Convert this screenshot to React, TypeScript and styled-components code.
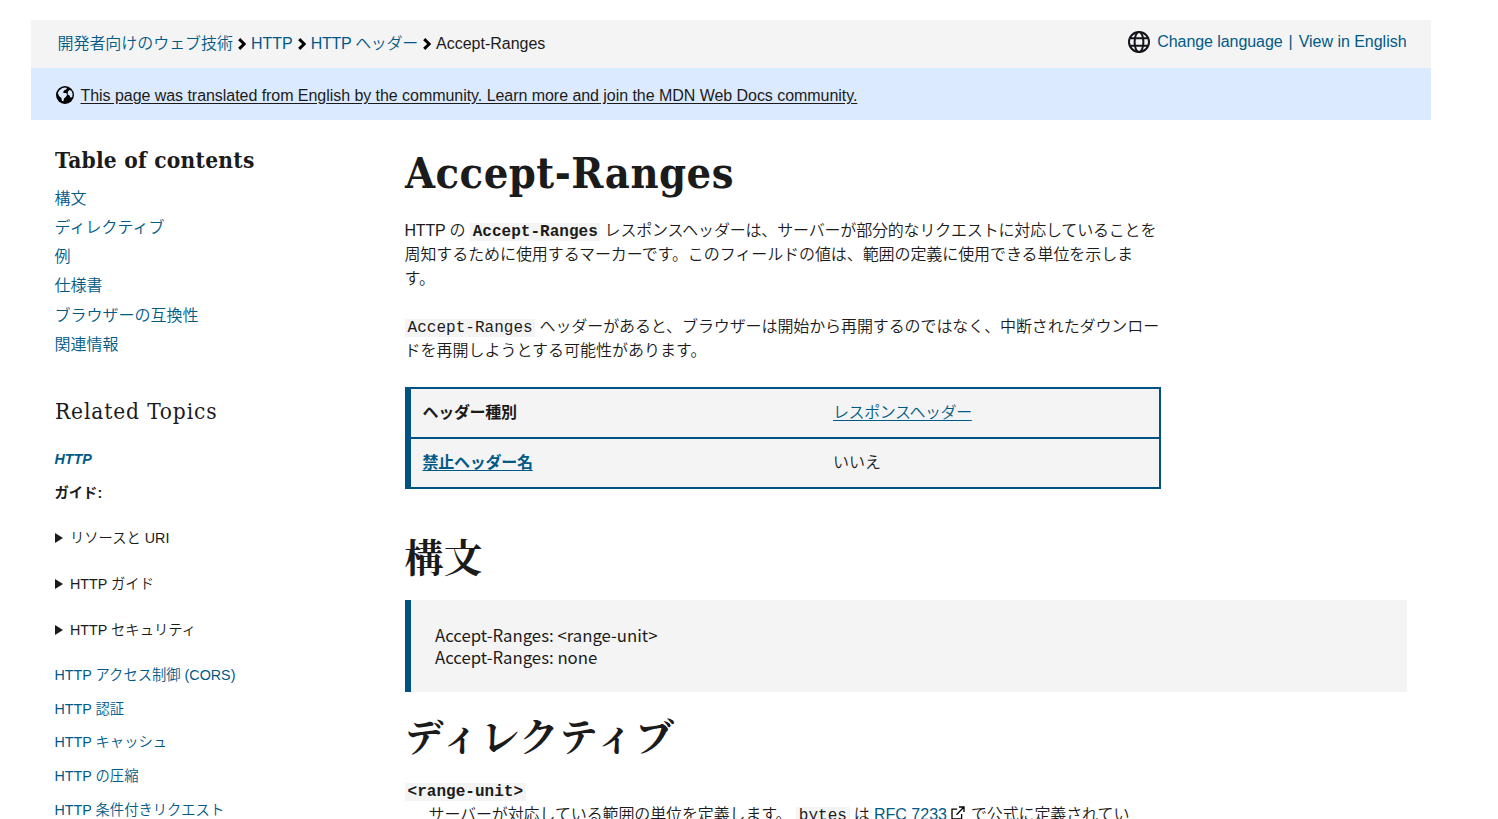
import React from 'react';
import styled, { createGlobalStyle } from 'styled-components';

const link = '#005a87';
const ink = '#1b1b1b';
const panel = '#f4f4f4';
const edge = '#005282';
const slab = '"DejaVu Serif Condensed", "DejaVu Serif", serif';

const GlobalStyle = createGlobalStyle`
  *, *::before, *::after { box-sizing: border-box; }
  html, body { margin: 0; height: 819px; overflow: hidden; background: #fff; }
  body {
    color: ${ink};
    font: 350 16px/24px "Liberation Sans", "Noto Sans CJK JP", sans-serif;
  }
  h1, h2, h3, p, ul, ol, dl, dd, pre { margin: 0; padding: 0; }
  ul, ol { list-style: none; }
`;

const Page = styled.div`
  width: 1400px;
  height: 799px;
  margin: 20px 0 0 31px;
  overflow: hidden;
`;

const TopBar = styled.header`
  display: flex;
  justify-content: space-between;
  height: 48px;
  padding: 0 24.5px 0 26.5px;
  background: ${panel};
`;

const Crumbs = styled.ol`
  display: flex;
  align-items: center;
  height: 47px;
  white-space: nowrap;
`;

const Crumb = styled.li<{ $spacing?: number }>`
  display: flex;
  align-items: center;
  letter-spacing: ${(p) => p.$spacing ?? 0}px;
`;

const Chevron = styled.svg`
  width: 8px;
  height: 12px;
  margin: 1px 5px 0;
`;

const Link = styled.a<{ $underlined?: boolean; $spacing?: number }>`
  color: ${link};
  text-decoration: ${(p) => (p.$underlined ? 'underline' : 'none')};
  text-underline-offset: 2px;
  letter-spacing: ${(p) => p.$spacing ?? 0}px;
`;

const Languages = styled.div`
  display: flex;
  align-items: center;
  height: 44px;
  color: ${link};
  white-space: nowrap;
  svg { margin-right: 7px; }
`;

const Divider = styled.span`
  margin: 0 6px;
`;

const Banner = styled.div`
  display: flex;
  align-items: center;
  height: 52px;
  padding: 4px 0 0 25px;
  background: #dbeafe;
  svg { margin-right: 6.5px; margin-top: -3px; }
`;

const BannerLink = styled.a`
  color: ${ink};
  letter-spacing: -0.047px;
  text-decoration: underline;
  text-underline-offset: 2px;
`;

const Columns = styled.div`
  display: grid;
  grid-template-columns: 350px 1002px;
  padding-left: 24px;
`;

const Sidebar = styled.aside`
  padding-top: 26px;
`;

const TocTitle = styled.h2`
  font: 700 22.5px/28px ${slab};
  letter-spacing: 0.25px;
`;

const TocList = styled.ul`
  margin: 9.6px 0 0 -0.5px;
`;

const TocItem = styled.li`
  height: 29.3px;
  line-height: 29.3px;
`;

const RelatedTitle = styled.h2`
  margin-top: 37.8px;
  font: 400 22.5px/28px ${slab};
  letter-spacing: 0.87px;
`;

const Topics = styled.div`
  margin: 18px 0 0 -0.5px;
  font-size: 14.3px;
  line-height: 33.7px;
`;

const TopicHead = styled.div<{ $link?: boolean }>`
  font-weight: 700;
  height: 33.7px;
  font-style: ${(p) => (p.$link ? 'italic' : 'normal')};
  color: ${(p) => (p.$link ? link : ink)};
`;

const Disclosure = styled.div`
  display: flex;
  align-items: center;
  height: 46px;
  svg { margin: -1px 7.5px 0 0; }
`;

const DisclosureList = styled.div`
  margin: 5px 0 5.3px;
`;

const TopicLink = styled.a`
  display: block;
  height: 33.7px;
  color: ${link};
`;

const Article = styled.main`
  padding-top: 25px;
  white-space: nowrap;
`;

const Title = styled.h1`
  font: 700 43px/56px ${slab};
  letter-spacing: 0.5px;
`;

const Paragraph = styled.p<{ $top: number }>`
  margin: ${(p) => p.$top}px 0 0 -0.5px;
`;

const Line = styled.span<{ $spacing?: number }>`
  display: block;
  height: 24px;
  letter-spacing: ${(p) => p.$spacing ?? 0}px;
`;

const Code = styled.code<{ $bold?: boolean }>`
  display: inline-block;
  height: 18px;
  margin-left: 0.5px;
  padding: 0 2.5px;
  font: ${(p) => (p.$bold ? 700 : 400)} 16px/19px "Liberation Mono", monospace;
  letter-spacing: 0.03px;
  background: ${panel};
`;

const Properties = styled.div`
  width: 756px;
  margin-top: 24px;
  border: 2px solid ${edge};
  border-left-width: 6px;
  background: ${panel};
`;

const PropertyRow = styled.div`
  display: grid;
  grid-template-columns: 410.5px 1fr;
  height: 48px;
  padding: 12px 11.5px 0;
  & + & { height: 50px; border-top: 2px solid ${edge}; }
`;

const PropertyName = styled.div`
  font-weight: 700;
  letter-spacing: -0.3px;
`;

const Heading = styled.h2<{ $top: number; $spacing?: number }>`
  margin: ${(p) => p.$top}px 0 0 -0.5px;
  font: 700 39px/50px "Liberation Serif", "Noto Serif CJK JP", "Noto Sans CJK JP", serif;
  letter-spacing: ${(p) => p.$spacing ?? 0}px;
`;

const Syntax = styled.pre`
  height: 92px;
  margin-top: 16px;
  padding: 23.5px 24px;
  border-left: 6px solid ${edge};
  background: ${panel};
  font: 400 16.75px/22px "Noto Sans CJK JP", sans-serif;
`;

const Definition = styled.dl`
  margin-top: 16px;
  dt { height: 24px; margin-left: -0.5px; }
  dd { margin-left: 23.5px; letter-spacing: -0.12px; }
`;

const ChevronIcon = () => (
  <Chevron viewBox="0 0 8 12">
    <path d="M1.2 1.2 6.2 6 1.2 10.8" fill="none" stroke="#000" strokeWidth="3" />
  </Chevron>
);

const GlobeIcon = () => (
  <svg width="22" height="22" viewBox="0 0 22 22" fill="none" stroke="#15141a" strokeWidth="2">
    <circle cx="11" cy="11" r="10" />
    <ellipse cx="11" cy="11" rx="4.4" ry="10" />
    <path d="M2 7.3h18M2 14.7h18" />
  </svg>
);

const EarthIcon = () => (
  <svg width="18" height="18" viewBox="0 0 18 18">
    <circle cx="9" cy="9" r="9" fill="#000" />
    <path d="M3.2 4.4 6.4 2l3.2-.4 1.4.8-1 1.2-2 1-1 1.8 1.2.6 1.8.1 1.2 1.7-1.4 2.3-1.6 1.2-.9 3-1.4-.4-.5-3L3 10 1.8 7zM12 5.6l1.6-1.5 1.8.6 1.2 3-.3 3.4-1.7.6-1.1-2.2-1.9-1.2z" fill="#dbeafe" />
  </svg>
);

const TriangleIcon = () => (
  <svg width="8" height="10" viewBox="0 0 8 10">
    <path d="M0 0v10l8-5z" fill={ink} />
  </svg>
);

const External = styled.svg`
  width: 14px;
  height: 14px;
  margin: 0 6px 0 4px;
`;

const ExternalIcon = () => (
  <External viewBox="0 0 14 14" fill="none" stroke="#000" strokeWidth="1.3">
    <path d="M6.2 3.2H1v9.6h9.6V8M8 1h5v5M13 1 5.5 8.7" />
  </External>
);

const toc = ['構文', 'ディレクティブ', '例', '仕様書', 'ブラウザーの互換性', '関連情報'];
const groups = ['リソースと URI', 'HTTP ガイド', 'HTTP セキュリティ'];
const topics = ['HTTP アクセス制御 (CORS)', 'HTTP 認証', 'HTTP キャッシュ', 'HTTP の圧縮', 'HTTP 条件付きリクエスト'];

export default function App() {
  return (
    <>
      <GlobalStyle />
      <Page>
        <TopBar>
          <Crumbs>
            <Crumb><Link $spacing={-0.05}>開発者向けのウェブ技術</Link><ChevronIcon /></Crumb>
            <Crumb><Link>HTTP</Link><ChevronIcon /></Crumb>
            <Crumb><Link $spacing={-0.3}>HTTP ヘッダー</Link><ChevronIcon /></Crumb>
            <Crumb>Accept-Ranges</Crumb>
          </Crumbs>
          <Languages>
            <GlobeIcon />
            <Link $spacing={-0.07}>Change language</Link>
            <Divider>|</Divider>
            <Link $spacing={-0.03}>View in English</Link>
          </Languages>
        </TopBar>
        <Banner>
          <EarthIcon />
          <BannerLink>This page was translated from English by the community. Learn more and join the MDN Web Docs community.</BannerLink>
        </Banner>
        <Columns>
          <Sidebar>
            <TocTitle>Table of contents</TocTitle>
            <TocList>
              {toc.map((item) => <TocItem key={item}><Link>{item}</Link></TocItem>)}
            </TocList>
            <RelatedTitle>Related Topics</RelatedTitle>
            <Topics>
              <TopicHead $link>HTTP</TopicHead>
              <TopicHead>ガイド:</TopicHead>
              <DisclosureList>
                {groups.map((item) => <Disclosure key={item}><TriangleIcon />{item}</Disclosure>)}
              </DisclosureList>
              {topics.map((item) => <TopicLink key={item}>{item}</TopicLink>)}
            </Topics>
          </Sidebar>
          <Article>
            <Title>Accept-Ranges</Title>
            <Paragraph $top={18}>
              <Line $spacing={-0.18}>HTTP の <Code $bold>Accept-Ranges</Code> レスポンスヘッダーは、サーバーが部分的なリクエストに対応していることを</Line>
              <Line $spacing={-0.08}>周知するために使用するマーカーです。このフィールドの値は、範囲の定義に使用できる単位を示しま</Line>
              <Line>す。</Line>
            </Paragraph>
            <Paragraph $top={24}>
              <Line $spacing={-0.1}><Code>Accept-Ranges</Code> ヘッダーがあると、ブラウザーは開始から再開するのではなく、中断されたダウンロー</Line>
              <Line>ドを再開しようとする可能性があります。</Line>
            </Paragraph>
            <Properties>
              <PropertyRow>
                <PropertyName>ヘッダー種別</PropertyName>
                <div><Link $underlined $spacing={-0.42}>レスポンスヘッダー</Link></div>
              </PropertyRow>
              <PropertyRow>
                <PropertyName><Link $underlined $spacing={-0.25}>禁止ヘッダー名</Link></PropertyName>
                <div>いいえ</div>
              </PropertyRow>
            </Properties>
            <Heading $top={45} $spacing={0.3}>構文</Heading>
            <Syntax>{'Accept-Ranges: <range-unit>\nAccept-Ranges: none'}</Syntax>
            <Heading $top={21} $spacing={0.6}>ディレクティブ</Heading>
            <Definition>
              <dt><Code $bold>&lt;range-unit&gt;</Code></dt>
              <dd>
                サーバーが対応している範囲の単位を定義します。 <Code>bytes</Code> は <Link>RFC 7233</Link><ExternalIcon />で公式に定義されてい
              </dd>
            </Definition>
          </Article>
        </Columns>
      </Page>
    </>
  );
}
